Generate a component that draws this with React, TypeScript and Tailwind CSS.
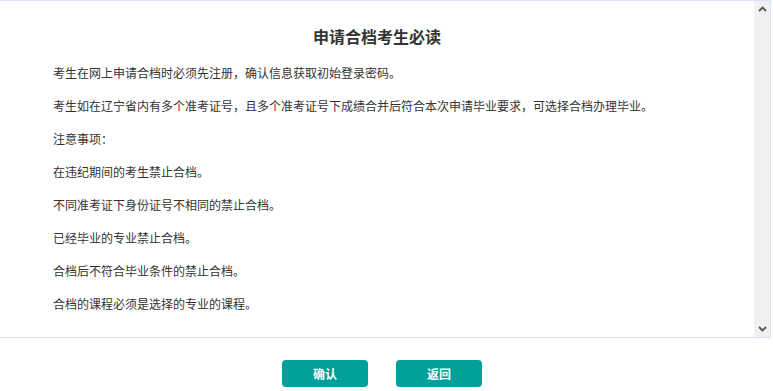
import React from "react";

const lines = [
  "考生在网上申请合档时必须先注册，确认信息获取初始登录密码。",
  "考生如在辽宁省内有多个准考证号，且多个准考证号下成绩合并后符合本次申请毕业要求，可选择合档办理毕业。",
  "注意事项：",
  "在违纪期间的考生禁止合档。",
  "不同准考证下身份证号不相同的禁止合档。",
  "已经毕业的专业禁止合档。",
  "合档后不符合毕业条件的禁止合档。",
  "合档的课程必须是选择的专业的课程。",
];

export default function App() {
  return (
    <div
      className="w-[773px] h-[391px] bg-white overflow-hidden"
      style={{ fontFamily: '"Microsoft YaHei", "Noto Sans CJK SC", "Noto Sans", sans-serif' }}
    >
      <div className="w-[771px] h-[338px] border-t border-b border-r border-[#d8e4f4] flex">
        <div className="flex-1 pt-[25px]">
          <h1 className="text-center text-[16px] leading-[20px] font-bold text-[#333] mb-[18px]">
            申请合档考生必读
          </h1>
          <div className="pl-[53px]">
            {lines.map((t, i) => (
              <p key={i} className="text-[12px] leading-[18px] text-[#333] mb-[15px] whitespace-nowrap">
                {t}
              </p>
            ))}
          </div>
        </div>
        <div className="w-[16px] bg-[#f0f0f0] flex flex-col justify-between items-center py-[5px]">
          <svg width="9" height="6" viewBox="0 0 9 6">
            <path d="M1 5 L4.5 1.5 L8 5" stroke="#555" strokeWidth="1.8" fill="none" />
          </svg>
          <svg width="9" height="6" viewBox="0 0 9 6">
            <path d="M1 1 L4.5 4.5 L8 1" stroke="#555" strokeWidth="1.8" fill="none" />
          </svg>
        </div>
      </div>
      <div className="flex justify-center gap-[28px] pr-[9px] mt-[22px]">
        <button className="w-[86px] h-[27px] rounded-[4px] bg-[#00a09a] text-white text-[12px] font-bold">
          确认
        </button>
        <button className="w-[86px] h-[27px] rounded-[4px] bg-[#00a09a] text-white text-[12px] font-bold">
          返回
        </button>
      </div>
    </div>
  );
}
